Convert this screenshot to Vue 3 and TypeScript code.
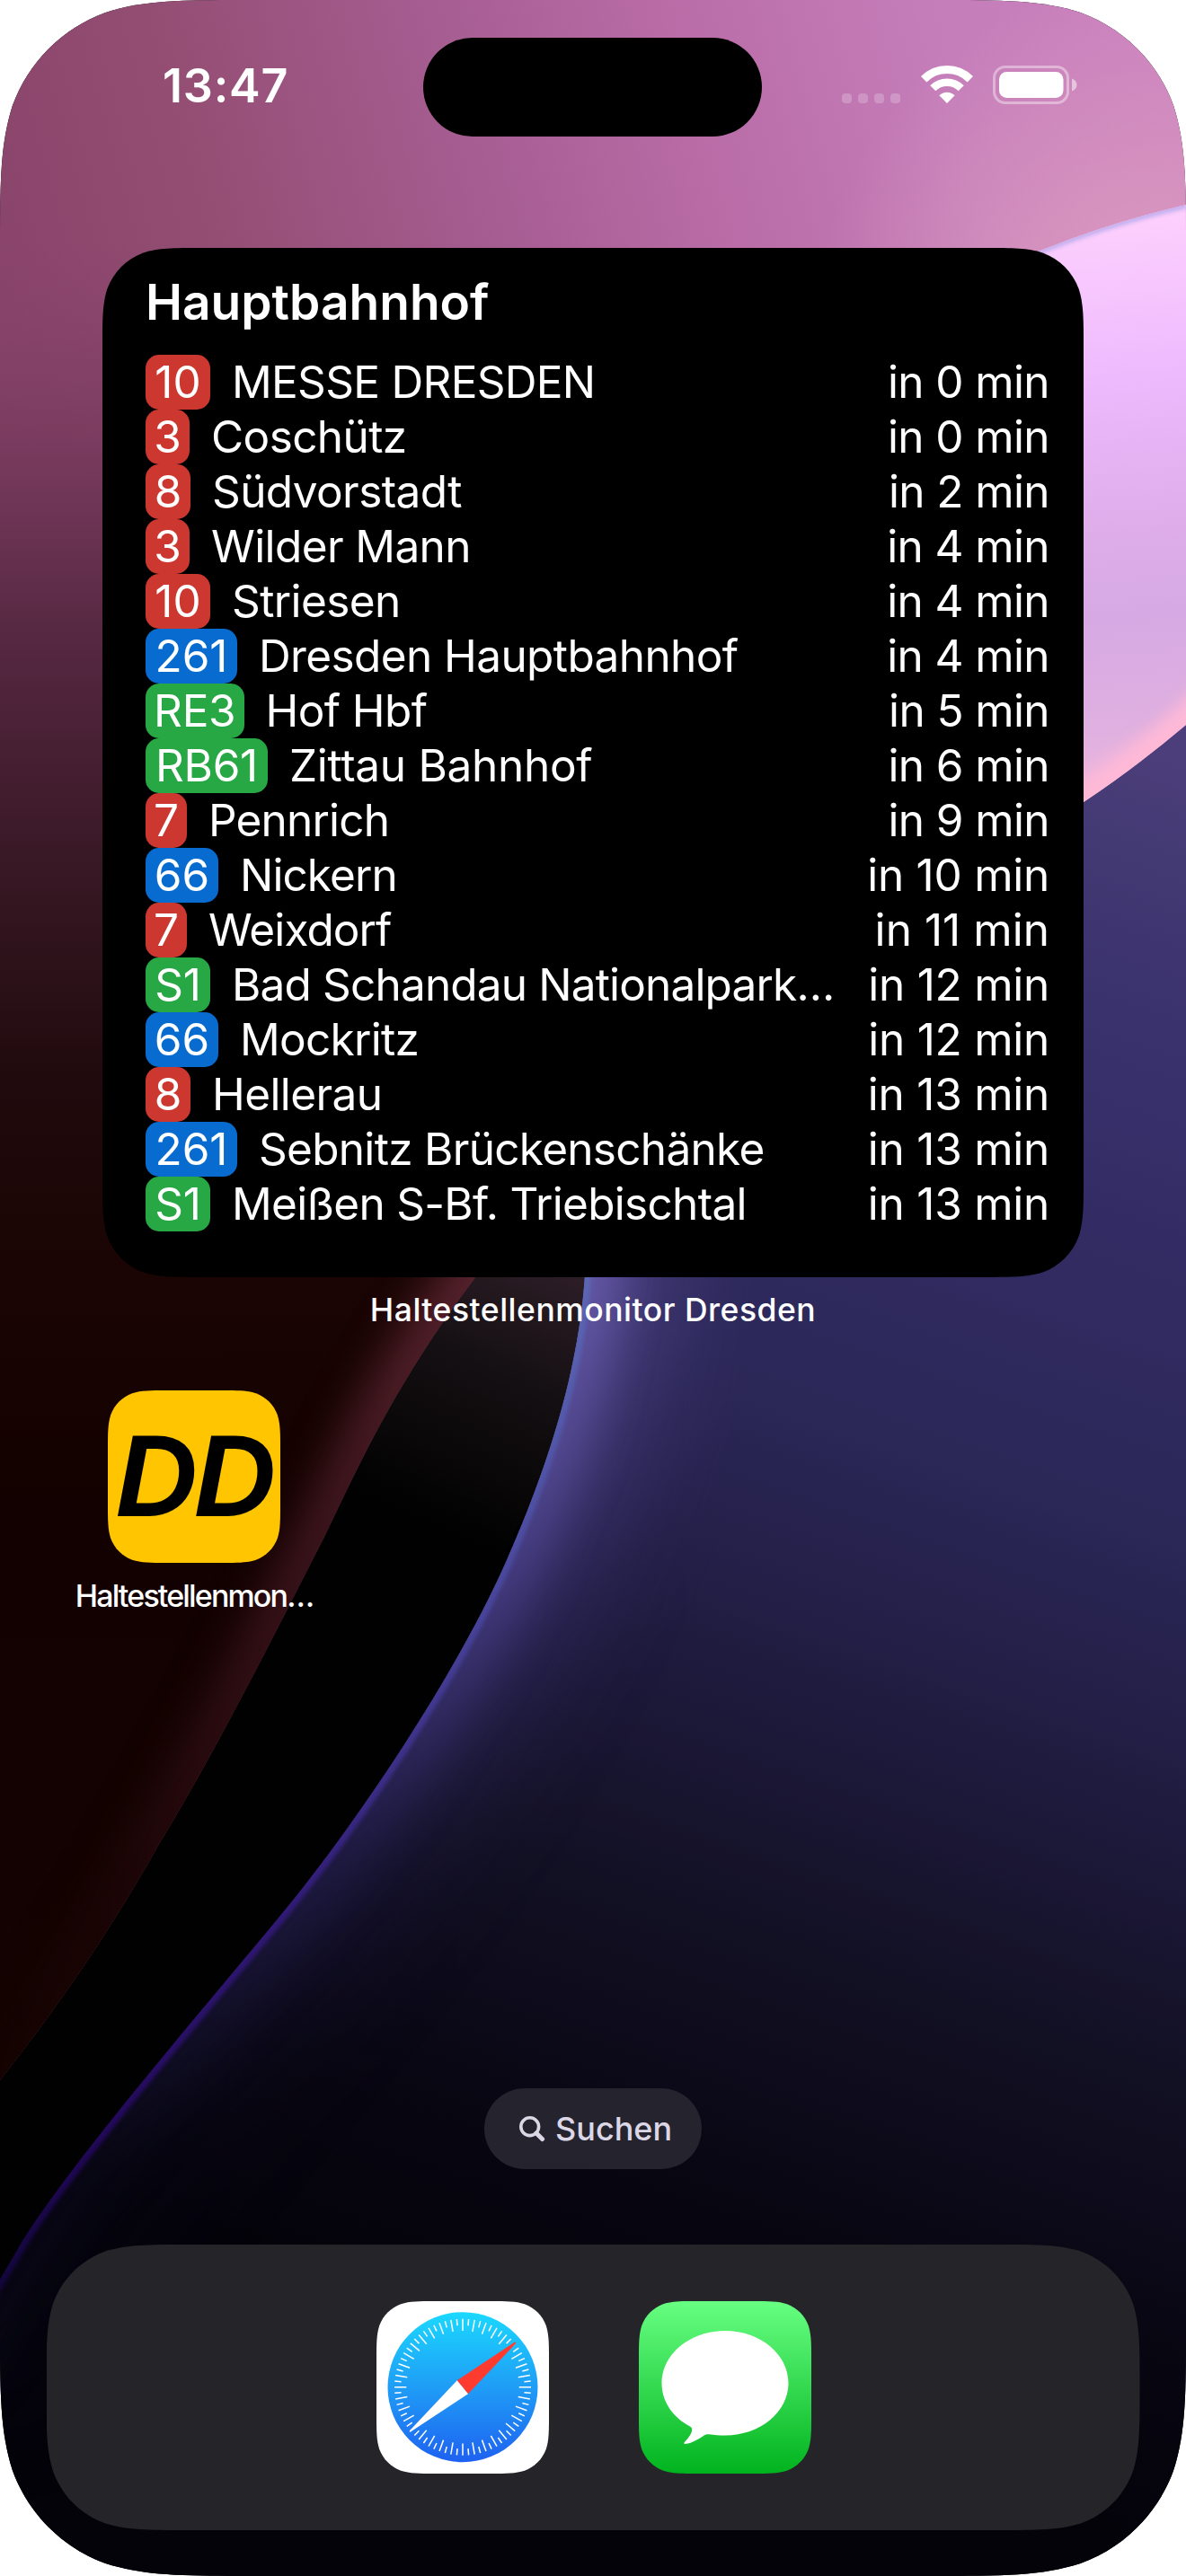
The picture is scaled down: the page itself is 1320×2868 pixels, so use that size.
<script setup lang="ts">
type Kind = 'tram' | 'bus' | 'rail'
interface Departure { line: string; kind: Kind; to: string; min: number; tracking?: number }

const departures: Departure[] = [
  { line: '10', kind: 'tram', to: 'MESSE DRESDEN', min: 0, tracking: -0.7 },
  { line: '3', kind: 'tram', to: 'Coschütz', min: 0 },
  { line: '8', kind: 'tram', to: 'Südvorstadt', min: 2 },
  { line: '3', kind: 'tram', to: 'Wilder Mann', min: 4 },
  { line: '10', kind: 'tram', to: 'Striesen', min: 4 },
  { line: '261', kind: 'bus', to: 'Dresden Hauptbahnhof', min: 4 },
  { line: 'RE3', kind: 'rail', to: 'Hof Hbf', min: 5 },
  { line: 'RB61', kind: 'rail', to: 'Zittau Bahnhof', min: 6, tracking: -0.3 },
  { line: '7', kind: 'tram', to: 'Pennrich', min: 9, tracking: -0.8 },
  { line: '66', kind: 'bus', to: 'Nickern', min: 10, tracking: -0.9 },
  { line: '7', kind: 'tram', to: 'Weixdorf', min: 11, tracking: -0.9 },
  { line: 'S1', kind: 'rail', to: 'Bad Schandau Nationalpark…', min: 12, tracking: -0.83 },
  { line: '66', kind: 'bus', to: 'Mockritz', min: 12, tracking: -0.7 },
  { line: '8', kind: 'tram', to: 'Hellerau', min: 13 },
  { line: '261', kind: 'bus', to: 'Sebnitz Brückenschänke', min: 13, tracking: -0.7 },
  { line: 'S1', kind: 'rail', to: 'Meißen S-Bf. Triebischtal', min: 13, tracking: -0.7 },
]

const badgeWidths: Record<string, number> = {
  '3': 49, '7': 46, '8': 50, '10': 72, '66': 81, '261': 102, S1: 72, RE3: 109.5, RB61: 136,
}
const minuteTracking = (min: number): number => (min === 11 ? 0.05 : min >= 10 ? -0.25 : -0.6)

// Rounded rectangle with continuous curvature corners.
function squircle(w: number, h: number, r: number): string {
  const a = 1.52866 * r, b = 1.08849 * r, c = 0.86841 * r
  const d = 0.63149 * r, e = 0.07491 * r, f = 0.37282 * r, g = 0.16906 * r
  return [
    `M${a} 0H${w - a}`,
    `C${w - b} 0 ${w - c} 0 ${w - d} ${e}C${w - f} ${g} ${w - g} ${f} ${w - e} ${d}C${w} ${c} ${w} ${b} ${w} ${a}`,
    `V${h - a}`,
    `C${w} ${h - b} ${w} ${h - c} ${w - e} ${h - d}C${w - g} ${h - f} ${w - f} ${h - g} ${w - d} ${h - e}C${w - c} ${h} ${w - b} ${h} ${w - a} ${h}`,
    `H${a}`,
    `C${b} ${h} ${c} ${h} ${d} ${h - e}C${f} ${h - g} ${g} ${h - f} ${e} ${h - d}C0 ${h - c} 0 ${h - b} 0 ${h - a}`,
    `V${a}`,
    `C0 ${b} 0 ${c} ${e} ${d}C${g} ${f} ${f} ${g} ${d} ${e}C${c} 0 ${b} 0 ${a} 0Z`,
  ].join('')
}
const screenClip = `path("${squircle(1320, 2868, 186)}")`
const widgetClip = `path("${squircle(1092, 1146, 72)}")`
const iconClip = `path("${squircle(192, 192, 43)}")`
const dockClip = `path("${squircle(1217, 318, 103)}")`

const blueEdge = 'M655 1300L652 1400C648 1520 608 1637 564 1737C509 1862 400 2025 320 2123C240 2221 85 2399 25 2495L-60 2640'
const redEdge = 'M640 1280L530 1421C440 1540 400 1630 362 1709C300 1830 240 1950 177 2053C120 2155 60 2240 0 2316L-80 2410'

const ticks = Array.from({ length: 72 }, (_, i) => ({ angle: i * 5, end: i % 2 ? 27 : 33 }))
</script>

<template>
  <main class="screen">
    <svg class="wallpaper" viewBox="0 0 1320 2868" preserveAspectRatio="none" color-interpolation-filters="sRGB" aria-hidden="true">
      <defs>
        <linearGradient id="indigo" gradientUnits="userSpaceOnUse" x1="1320" y1="850" x2="700" y2="2650">
          <stop offset="0" stop-color="#4c3e7a" /><stop offset=".05" stop-color="#443a74" />
          <stop offset=".15" stop-color="#3a326d" /><stop offset=".27" stop-color="#332c64" />
          <stop offset=".41" stop-color="#2c2859" /><stop offset=".5" stop-color="#26224d" />
          <stop offset=".63" stop-color="#1b1736" /><stop offset=".73" stop-color="#121023" />
          <stop offset=".8" stop-color="#0e0b1c" /><stop offset=".9" stop-color="#07050f" />
          <stop offset="1" stop-color="#04030a" />
        </linearGradient>
        <linearGradient id="pink" gradientUnits="userSpaceOnUse" x1="0" y1="420" x2="1320" y2="60">
          <stop offset="0" stop-color="#88436a" /><stop offset=".2" stop-color="#944e73" />
          <stop offset=".42" stop-color="#a65d92" /><stop offset=".6" stop-color="#b96ca6" />
          <stop offset=".8" stop-color="#c47db9" /><stop offset="1" stop-color="#cb82bf" />
        </linearGradient>
        <radialGradient id="blush" gradientUnits="userSpaceOnUse" cx="1280" cy="350" r="370">
          <stop offset="0" stop-color="#dd9cc0" /><stop offset="1" stop-color="#dd9cc0" stop-opacity="0" />
        </radialGradient>
        <linearGradient id="shade" gradientUnits="userSpaceOnUse" x1="0" y1="270" x2="0" y2="2300">
          <stop offset="0" stop-color="#88436a" stop-opacity="0" /><stop offset=".07" stop-color="#824066" stop-opacity=".85" />
          <stop offset=".14" stop-color="#703657" />
          <stop offset=".21" stop-color="#582943" /><stop offset=".3" stop-color="#421d2e" />
          <stop offset=".36" stop-color="#341621" /><stop offset=".46" stop-color="#200a0d" />
          <stop offset=".56" stop-color="#1a0504" /><stop offset=".7" stop-color="#120100" />
          <stop offset="1" stop-color="#140302" />
        </linearGradient>
        <linearGradient id="lobe" gradientUnits="userSpaceOnUse" x1="1230" y1="250" x2="1290" y2="870">
          <stop offset="0" stop-color="#fccffd" /><stop offset=".12" stop-color="#f6c6fe" />
          <stop offset=".28" stop-color="#edbafd" /><stop offset=".52" stop-color="#dfaeeb" />
          <stop offset=".7" stop-color="#d6a9e4" /><stop offset=".9" stop-color="#dfb0e0" />
          <stop offset="1" stop-color="#ecb6de" />
        </linearGradient>
        <linearGradient id="band" gradientUnits="userSpaceOnUse" x1="620" y1="1380" x2="480" y2="1700">
          <stop offset="0" stop-color="#32202a" /><stop offset=".45" stop-color="#151013" /><stop offset="1" stop-color="#010101" />
        </linearGradient>
        <linearGradient id="rim" gradientUnits="userSpaceOnUse" x1="640" y1="1420" x2="0" y2="2540">
          <stop offset="0" stop-color="#5b67b4" /><stop offset=".3" stop-color="#47439a" />
          <stop offset=".6" stop-color="#311a76" /><stop offset=".85" stop-color="#22085a" /><stop offset="1" stop-color="#13063c" />
        </linearGradient>
        <linearGradient id="halo" gradientUnits="userSpaceOnUse" x1="640" y1="1420" x2="100" y2="2400">
          <stop offset="0" stop-color="#7465ba" /><stop offset=".3" stop-color="#4d4490" />
          <stop offset=".6" stop-color="#252050" /><stop offset="1" stop-color="#0b0918" />
        </linearGradient>
        <linearGradient id="ember" gradientUnits="userSpaceOnUse" x1="540" y1="1400" x2="0" y2="2300">
          <stop offset="0" stop-color="#7a3446" /><stop offset=".45" stop-color="#471a24" />
          <stop offset=".8" stop-color="#200709" /><stop offset="1" stop-color="#150302" />
        </linearGradient>
        <filter id="soft8" filterUnits="userSpaceOnUse" x="1000" y="600" width="500" height="500"><feGaussianBlur stdDeviation="9" /></filter>
        <filter id="soft2" filterUnits="userSpaceOnUse" x="-200" y="0" width="1720" height="2868"><feGaussianBlur stdDeviation="2.2" /></filter>
        <filter id="soft30" filterUnits="userSpaceOnUse" x="-300" y="1000" width="1300" height="1868"><feGaussianBlur stdDeviation="26" /></filter>
        <filter id="soft60" filterUnits="userSpaceOnUse" x="-300" y="1000" width="1500" height="1868"><feGaussianBlur stdDeviation="60" /></filter>
        <clipPath id="lobeShape"><path d="M1100 305Q1200 256 1320 228V807Q1262 856 1206 893L1100 950Z" /></clipPath>
        <clipPath id="blueShape"><path :d="`${blueEdge}V2868H1320V800H655Z`" /></clipPath>
        <clipPath id="redShape"><path :d="`${redEdge}V0H1320V600Z`" /></clipPath>
      </defs>
      <rect width="1320" height="2868" fill="#010101" />
      <path d="M500 1200H700V1480L520 1800L300 2000L400 1600Z" fill="url(#band)" />
      <g clip-path="url(#blueShape)">
        <rect width="1320" height="2868" fill="url(#indigo)" />
        <path :d="blueEdge" fill="none" stroke="url(#halo)" stroke-width="150" opacity=".5" filter="url(#soft60)" />
        <path :d="blueEdge" fill="none" stroke="url(#halo)" stroke-width="70" opacity=".7" filter="url(#soft30)" />
        <path :d="blueEdge" fill="none" stroke="url(#rim)" stroke-width="14" filter="url(#soft2)" />
      </g>
      <g clip-path="url(#redShape)">
        <rect width="1320" height="2450" fill="url(#pink)" />
        <rect x="800" width="520" height="800" fill="url(#blush)" />
        <rect y="270" width="700" height="2160" fill="url(#shade)" />
        <path :d="redEdge" fill="none" stroke="url(#ember)" stroke-width="60" opacity=".78" filter="url(#soft30)" />
      </g>
      <path d="M1100 950L1206 893Q1262 856 1320 807V1500H1100Z" fill="url(#indigo)" />
      <g clip-path="url(#lobeShape)">
        <rect x="1100" y="200" width="220" height="760" fill="url(#lobe)" />
        <path d="M1100 950L1206 893Q1262 856 1320 807L1400 730" fill="none" stroke="#ffb9d6" stroke-width="42" filter="url(#soft8)" />
        <path d="M1100 305Q1200 256 1320 228" fill="none" stroke="#c4b0ee" stroke-width="8" filter="url(#soft2)" />
      </g>
    </svg>

    <header class="status">
      <div class="time">13:47</div>
      <div class="island"></div>
      <div class="indicators">
        <span class="dots"><i v-for="n in 4" :key="n"></i></span>
        <svg class="wifi" viewBox="0 0 58 42" width="58" height="42" aria-hidden="true">
          <g fill="none" stroke="#fff">
            <path d="M3.2 15.2A36.5 36.5 0 0 1 54.8 15.2" stroke-width="9" />
            <path d="M13.3 25.3A22.2 22.2 0 0 1 44.7 25.3" stroke-width="8.6" />
          </g>
          <path d="M29 42L20.4 33.2A12.3 12.3 0 0 1 37.6 33.2Z" fill="#fff" />
        </svg>
        <svg class="battery" viewBox="0 0 94 43" width="94" height="43" aria-hidden="true">
          <rect x="1.5" y="1.5" width="82" height="40" rx="12.5" fill="none" stroke="#fff" stroke-opacity=".4" stroke-width="3" />
          <rect x="7" y="7" width="71.5" height="29" rx="8.5" fill="#fff" />
          <path d="M88 14.5Q93.5 16.5 93.5 21.5T88 28.5Z" fill="#fff" fill-opacity=".5" />
        </svg>
      </div>
    </header>

    <section class="widget">
      <h1>Hauptbahnhof</h1>
      <ul>
        <li v-for="(d, i) in departures" :key="i">
          <span class="badge" :class="d.kind" :style="{ width: `${badgeWidths[d.line]}px` }">{{ d.line }}</span>
          <span class="to" :style="{ letterSpacing: `${d.tracking ?? -0.6}px` }">{{ d.to }}</span>
          <span class="in" :style="{ letterSpacing: `${minuteTracking(d.min)}px` }">in {{ d.min }} min</span>
        </li>
      </ul>
    </section>
    <p class="caption">Haltestellenmonitor Dresden</p>

    <div class="app">
      <div class="icon dd"><b>DD</b></div>
      <span>Haltestellenmon…</span>
    </div>

    <button class="search" type="button">
      <svg viewBox="0 0 30 30" width="30" height="30" aria-hidden="true">
        <circle cx="12.7" cy="12.7" r="9.9" fill="none" stroke="#dcd7e6" stroke-width="3.6" />
        <path d="M20 20L26.5 26.5" stroke="#dcd7e6" stroke-width="5" stroke-linecap="round" />
      </svg>
      <span>Suchen</span>
    </button>

    <nav class="dock">
      <svg class="icon" viewBox="0 0 192 192" aria-label="Safari">
        <defs>
          <linearGradient id="sky" x1="0" y1="0" x2="0" y2="1"><stop offset="0" stop-color="#1bd8fe" /><stop offset=".5" stop-color="#1f9df6" /><stop offset="1" stop-color="#1e61f0" /></linearGradient>
        </defs>
        <rect width="192" height="192" fill="#fff" />
        <circle cx="96" cy="95.7" r="83.5" fill="url(#sky)" />
        <g stroke="#fff" stroke-width="1.5">
          <path v-for="t in ticks" :key="t.angle" :d="`M96 19.7V${t.end}`" :transform="`rotate(${t.angle} 96 95.7)`" />
        </g>
        <path d="M154 45.6Q156 45.6 154.7 47.5L102 103.3L89.7 88.3Z" fill="#ff3b30" />
        <path d="M37.5 145.8Q36 145.5 37.4 143.8L89.7 88.3L102 103.3Z" fill="#fff" />
      </svg>
      <svg class="icon" viewBox="0 0 192 192" aria-label="Nachrichten">
        <defs>
          <linearGradient id="mint" x1="0" y1="0" x2="0" y2="1"><stop offset="0" stop-color="#67ff82" /><stop offset="1" stop-color="#01b31e" /></linearGradient>
        </defs>
        <rect width="192" height="192" fill="url(#mint)" />
        <path d="M96 33C57 33 25.5 59 25.5 91.3C25.5 111 37 129 57 139.5C59 140.5 59.5 142 59 144.5C58 149.5 53 154.5 50.5 157.5C50 158.5 50.5 159 51.5 159C60 158 67 153 71.5 150.2C74 148.5 75.5 148 78.5 148.3C84 149.2 90 149.5 96 149.5C135 149.5 166.5 123.5 166.5 91.3C166.5 59 135 33 96 33Z" fill="#fff" />
      </svg>
    </nav>
  </main>
</template>

<style>
html, body { margin: 0; background: #fff; }
</style>

<style scoped>
.screen {
  position: relative;
  display: flex;
  flex-direction: column;
  width: 1320px;
  height: 2868px;
  overflow: hidden;
  clip-path: v-bind(screenClip);
  font-family: Inter, "Liberation Sans", sans-serif;
  color: #fff;
}
.wallpaper { position: absolute; inset: 0; width: 100%; height: 100%; }
.screen > :not(.wallpaper) { position: relative; }
.status { display: flex; height: 276px; flex: none; align-items: flex-start; }
.time { width: 471px; padding: 62px 0 0 181px; box-sizing: border-box; font-size: 52px; line-height: 68px; font-weight: 600; letter-spacing: .8px; white-space: nowrap; }
.island { width: 377px; height: 110px; margin-top: 42px; border-radius: 55px; background: #000; }
.indicators { display: flex; margin: 73px 0 0 89px; height: 43px; align-items: flex-start; }
.dots { display: flex; gap: 7px; margin-top: 31px; }
.dots i { width: 11px; height: 11px; border-radius: 4px; background: rgba(255, 255, 255, .22); }
.wifi { margin-left: 22.5px; }
.battery { margin-left: 22.5px; }
.widget {
  width: 1092px; height: 1146px; margin-left: 114px; flex: none;
  padding: 26px 38px 0 48px; box-sizing: border-box;
  background: #000; clip-path: v-bind(widgetClip);
}
h1 { margin: 0 0 25px; font-size: 55px; line-height: 68px; font-weight: 600; letter-spacing: 0; }
ul { margin: 0; padding: 0; list-style: none; }
li { display: flex; height: 61px; font-size: 49.5px; line-height: 61px; white-space: nowrap; }
.badge { border-radius: 15px; text-align: center; letter-spacing: 0; }
.tram { background: #cc382f; }
.bus { background: #086bd0; }
.rail { background: #28a745; letter-spacing: -.3px; }
.to { margin-left: 24px; }
.in { margin-left: auto; }
.caption { margin: 15px 0 0; text-align: center; font-size: 35.5px; line-height: 44px; font-weight: 500; letter-spacing: .5px; }
.app { width: 432px; margin-top: 67px; display: flex; flex-direction: column; align-items: center; font-size: 34px; line-height: 44px; font-weight: 500; letter-spacing: -1.85px; }
.app span { margin-top: 15px; }
.icon { display: block; width: 192px; height: 192px; clip-path: v-bind(iconClip); }
.dd { display: flex; justify-content: center; background: #ffc600; color: #000; }
.dd b { font: italic bold 130px/190px "Liberation Sans", sans-serif; letter-spacing: -4px; transform: scaleX(.97); }
.search {
  display: flex; align-items: center; width: 242px; height: 90px; margin: 526px auto 0; padding: 0 0 0 38px; flex: none;
  border: 0; border-radius: 45px; background: #25232e; color: #dcd7e6;
  font: 500 36px/44px Inter, sans-serif; letter-spacing: 0;
}
.search span { margin-left: 11px; }
.dock {
  display: flex; align-items: center; justify-content: center; gap: 100px; width: 1217px; height: 318px; margin: 84px auto 0; flex: none;
  padding-left: 2px; box-sizing: border-box;
  background: #252429; clip-path: v-bind(dockClip);
}
</style>
